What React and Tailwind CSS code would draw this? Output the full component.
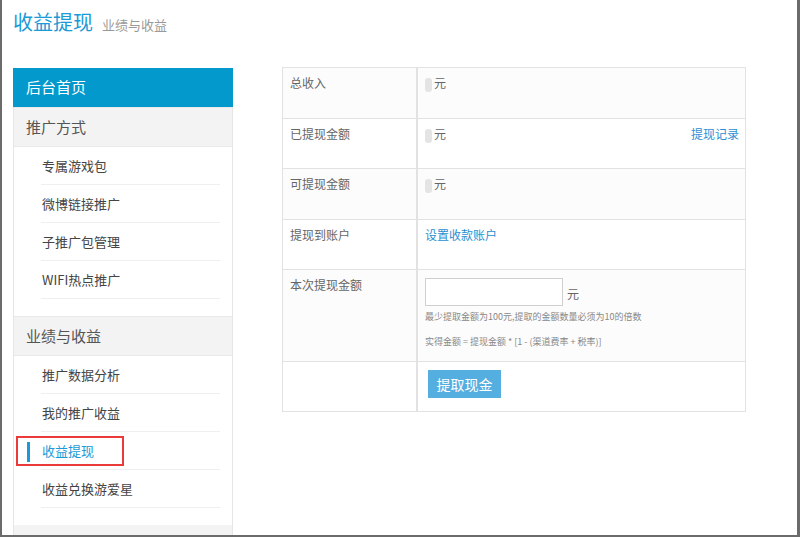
const font = { fontFamily: '"Noto Sans CJK SC", "Noto Sans", sans-serif' };

const groups = [
  { title: "推广方式", items: ["专属游戏包", "微博链接推广", "子推广包管理", "WIFI热点推广"] },
  { title: "业绩与收益", items: ["推广数据分析", "我的推广收益", "收益提现", "收益兑换游爱星"] },
];

function Blob() {
  return <span className="inline-block w-[7px] h-[14px] mr-[2px] bg-[#e4e4e4] rounded-[3px] blur-[0.6px] align-middle" />;
}

function Row({ label, bg, h, children }) {
  return (
    <div className={`flex border-b border-[#e2e2e2] ${bg} ${h}`}>
      <div className="w-[135px] shrink-0 border-r-2 border-[#e2e2e2] pl-[7px] pt-[7px] text-[12px] leading-[16px] text-[#666]">
        {label}
      </div>
      <div className="flex-1 pl-[7px] pr-[6px] pt-[7px] text-[12px] leading-[16px] text-[#666]">{children}</div>
    </div>
  );
}

export default function App() {
  return (
    <div
      className="w-[800px] h-[537px] bg-white border-l-2 border-r-[3px] border-b-2 border-[#6b6b6b] overflow-hidden"
      style={font}
    >
      {/* page title */}
      <div className="pl-[11px] pt-[8px] flex items-end gap-[9px]">
        <h1 className="text-[20px] leading-[28px] text-[#1a9ad6]">收益提现</h1>
        <span className="text-[13px] leading-[22px] text-[#9a9a9a]">业绩与收益</span>
      </div>

      <div className="flex mt-[32px] pl-[11px]">
        {/* sidebar */}
        <div className="w-[220px] shrink-0">
          <div className="h-[39px] bg-[#0399cc] flex items-center pl-[13px] text-[15px] text-white">后台首页</div>
          <div className="border-x border-[#e6e6e6]">
            {groups.map((g) => (
              <div key={g.title} className="pb-[17px]">
                <div className="h-[40px] bg-[#f3f3f3] border-y border-[#e9e9e9] flex items-center pl-[12px] text-[15px] text-[#555]">
                  {g.title}
                </div>
                {g.items.map((it) => {
                  const active = it === "收益提现";
                  return (
                    <div key={it} className="relative ml-[27px] mr-[12px] h-[38px] border-b border-[#efefef] flex items-center pl-[1px] text-[13px]">
                      {active && (
                        <>
                          <span className="absolute left-[-14px] top-[10px] w-[3px] h-[20px] bg-[#1a9ad6]" />
                          <span className="absolute left-[-25px] top-[4px] w-[108px] h-[30px] border-2 border-[#ea3a3a]" />
                        </>
                      )}
                      <span className={active ? "text-[#1a9ad6]" : "text-[#444]"}>{it}</span>
                    </div>
                  );
                })}
              </div>
            ))}
            <div className="h-[20px] bg-[#f3f3f3]" />
          </div>
        </div>

        {/* withdraw table */}
        <div className="ml-[49px] mt-[-1px] w-[464px] self-start border-x border-t border-[#e2e2e2]">
          <Row label="总收入" bg="bg-[#fcfcfc]" h="h-[51px]">
            <Blob />元
          </Row>
          <Row label="已提现金额" bg="bg-white" h="h-[50px]">
            <div className="flex justify-between">
              <span><Blob />元</span>
              <span className="text-[#2b8fd3]">提现记录</span>
            </div>
          </Row>
          <Row label="可提现金额" bg="bg-[#fcfcfc]" h="h-[51px]">
            <Blob />元
          </Row>
          <Row label="提现到账户" bg="bg-white" h="h-[50px]">
            <span className="text-[#2b8fd3]">设置收款账户</span>
          </Row>
          <Row label="本次提现金额" bg="bg-[#fcfcfc]" h="h-[92px]">
            <div className="flex items-center gap-[4px] mt-[1px]">
              <input className="w-[138px] h-[28px] border border-[#cfcfcf] bg-white outline-none" />
              <span className="text-[12px] pt-[4px]">元</span>
            </div>
            <p className="mt-[4px] text-[9px] leading-[14px] text-[#888]">最少提取金额为100元,提取的金额数量必须为10的倍数</p>
            <p className="mt-[11px] text-[9px] leading-[14px] text-[#888]">实得金额 = 提现金额 * [1 - (渠道费率 + 税率)]</p>
          </Row>
          <Row label="" bg="bg-white" h="h-[50px]">
            <button className="ml-[3px] mt-[1px] w-[73px] h-[28px] bg-[#55aee0] text-white text-[14px]">提取现金</button>
          </Row>
        </div>
      </div>
    </div>
  );
}
